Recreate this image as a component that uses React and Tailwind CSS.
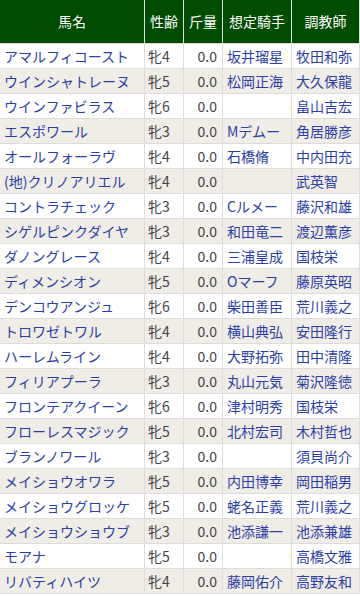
import React from 'react';

const rows = [
  ['アマルフィコースト', '牝4', '坂井瑠星', '牧田和弥'],
  ['ウインシャトレーヌ', '牝5', '松岡正海', '大久保龍'],
  ['ウインファビラス', '牝6', '', '畠山吉宏'],
  ['エスポワール', '牝3', 'Mデムー', '角居勝彦'],
  ['オールフォーラヴ', '牝4', '石橋脩', '中内田充'],
  ['(地)クリノアリエル', '牝4', '', '武英智'],
  ['コントラチェック', '牝3', 'Cルメー', '藤沢和雄'],
  ['シゲルピンクダイヤ', '牝3', '和田竜二', '渡辺薫彦'],
  ['ダノングレース', '牝4', '三浦皇成', '国枝栄'],
  ['ディメンシオン', '牝5', 'Oマーフ', '藤原英昭'],
  ['デンコウアンジュ', '牝6', '柴田善臣', '荒川義之'],
  ['トロワゼトワル', '牝4', '横山典弘', '安田隆行'],
  ['ハーレムライン', '牝4', '大野拓弥', '田中清隆'],
  ['フィリアプーラ', '牝3', '丸山元気', '菊沢隆徳'],
  ['フロンテアクイーン', '牝6', '津村明秀', '国枝栄'],
  ['フローレスマジック', '牝5', '北村宏司', '木村哲也'],
  ['ブランノワール', '牝3', '', '須貝尚介'],
  ['メイショウオワラ', '牝5', '内田博幸', '岡田稲男'],
  ['メイショウグロッケ', '牝5', '蛯名正義', '荒川義之'],
  ['メイショウショウブ', '牝3', '池添謙一', '池添兼雄'],
  ['モアナ', '牝5', '', '高橋文雅'],
  ['リバティハイツ', '牝4', '藤岡佑介', '高野友和'],
];

const headers = ['馬名', '性齢', '斤量', '想定騎手', '調教師'];

export default function App() {
  return (
    <div
      className="w-[360px] h-[596px] overflow-hidden bg-white text-[14px]"
      style={{ fontFamily: '"Noto Sans CJK JP", "Noto Sans", sans-serif' }}
    >
      <div className="grid grid-cols-[144px_38px_38px_68px_67px] grid-rows-[43px] auto-rows-[24px] gap-px bg-[#dcdcdc] w-[360px] pr-px pb-px">
        {/* Header */}
        {headers.map((h) => (
          <div
            key={h}
            className="flex items-center justify-center bg-[#004c00] text-white whitespace-nowrap"
          >
            {h}
          </div>
        ))}

        {/* Rows */}
        {rows.map(([name, sex, jockey, trainer], i) => {
          const bg = i % 2 === 1 ? 'bg-[#f0ece6]' : 'bg-white';
          return (
            <React.Fragment key={name}>
              <div className={`${bg} flex items-center pl-[4px] text-[#2a3fa8] whitespace-nowrap overflow-hidden`}>
                {name}
              </div>
              <div className={`${bg} flex items-center pl-[3px] text-[#444] whitespace-nowrap`}>
                {sex}
              </div>
              <div className={`${bg} flex items-center justify-end pr-[5px] text-[#444]`}>
                0.0
              </div>
              <div className={`${bg} flex items-center pl-[4px] text-[#2a3fa8] whitespace-nowrap overflow-hidden`}>
                {jockey}
              </div>
              <div className={`${bg} flex items-center pl-[4px] text-[#2a3fa8] whitespace-nowrap overflow-hidden`}>
                {trainer}
              </div>
            </React.Fragment>
          );
        })}
      </div>
    </div>
  );
}
